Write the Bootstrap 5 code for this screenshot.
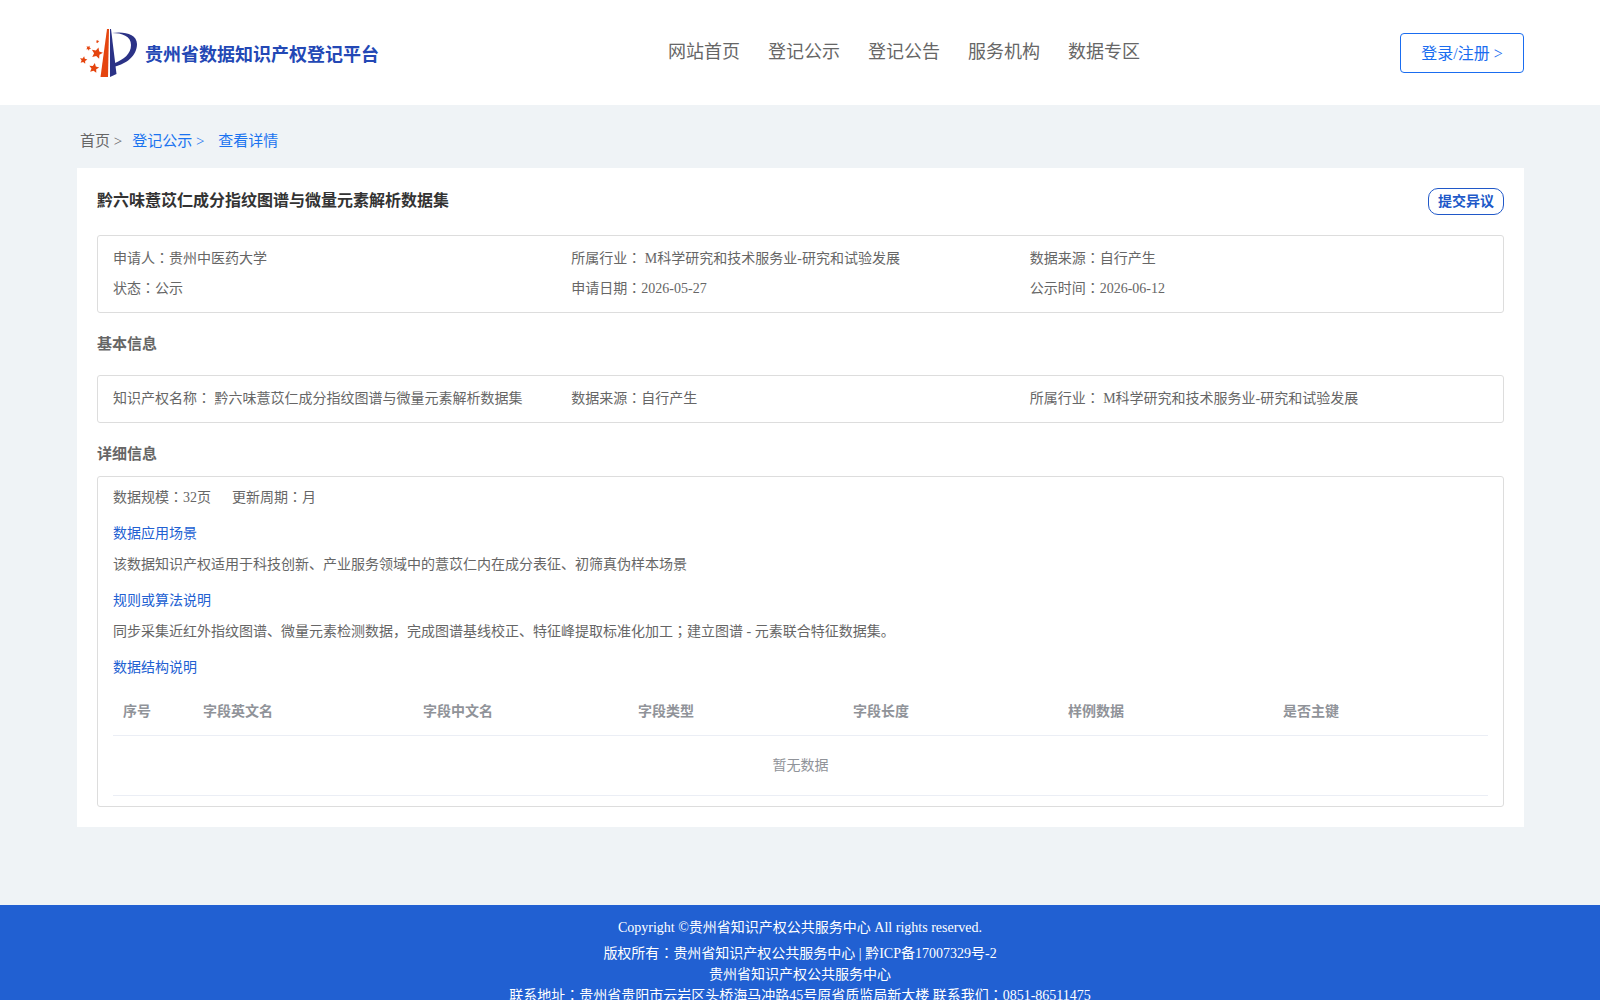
<!DOCTYPE html>
<html lang="zh-CN">
<head>
<meta charset="utf-8">
<meta name="viewport" content="width=device-width, initial-scale=1">
<title>贵州省数据知识产权登记平台</title>
<link href="https://cdn.jsdelivr.net/npm/bootstrap@5.3.0/dist/css/bootstrap.min.css" rel="stylesheet">
<style>
body{font-family:"Liberation Serif","WenQuanYi Micro Hei","Droid Sans Fallback","Noto Sans CJK SC",serif;font-size:14px;line-height:21px;color:#666;background:#eff3f6}
a{text-decoration:none}
/* centred full-width punctuation */
.pc{font-family:"Noto Sans CJK TC",sans-serif;font-feature-settings:"locl" 0;line-height:1}
.wrap{padding-left:77px;padding-right:76px}
.site-head{height:105px}
.brand{gap:8px;padding-left:3px}
.brand-name{font-size:18px;font-weight:700;color:#2348b5;line-height:24px;padding-top:5px}
.site-nav{gap:28px;margin-left:29px;padding-bottom:2px;font-size:18px;line-height:24px}
.site-nav a{color:#666}
.btn-login{width:124px;height:40px;padding:2px 0 0;font-size:16px;border-radius:4px;color:#1a6df0;border:1px solid #1a6df0}
.crumbs{height:63px;padding-top:10px;padding-left:3px;gap:10px;font-size:15px;white-space:pre}
.crumbs a{color:#666}
.crumbs .on{color:#1a73f0}
.sheet{padding:20px;margin-bottom:78px}
.sheet h1{font-size:16px;line-height:25px;font-weight:700;color:#333;margin:0}
.btn-object{width:76px;height:27px;padding:0;line-height:21px;font-size:14px;font-weight:700;color:#2058c8;border:1px solid #2058c8;border-radius:10px}
.panel{border:1px solid #ddd;border-radius:3px;padding:8px 15px;line-height:30px}
.panel .row{--bs-gutter-x:0}
.panel-first{margin-top:20px}
.sheet h2{font-size:15px;line-height:22px;font-weight:700;color:#666;margin:20px 0}
.sheet h2.tight{margin-bottom:11px}
.detail{padding:5px 15px 10px;line-height:31px}
.scale-row{gap:21px}
.detail h3{font-size:14px;line-height:31px;font-weight:400;color:#2160d2;margin:5px 0 0}
.detail p{margin:0}
.fields{table-layout:fixed;margin:3px 0 0;line-height:23px;--bs-table-bg:transparent;--bs-table-color:#909399;color:#909399;border-color:#ebeef5}
.fields th{padding:14px 10px 12px;color:#909399;border-bottom:1px solid #ebeef5}
.fields td{padding:18px 10px;color:#909399;border-bottom:1px solid #ebeef5}
.c-no{width:80px}.c-en{width:220px}
.site-foot{background:#2160d2;color:#fff;padding:12px 0 24px}
.copy-line{margin-bottom:5px}
</style>
<script src="https://cdn.jsdelivr.net/npm/bootstrap@5.3.0/dist/js/bootstrap.bundle.min.js"></script>
</head>
<body>
<header class="site-head wrap bg-white d-flex align-items-center justify-content-between">
  <a href="#" class="brand d-flex align-items-center">
    <svg width="57" height="50" viewBox="0 0 57 50" aria-hidden="true">
      <defs><path id="star" d="M0-5L1.500-1.800 5-1.500 2.400.9 3.100 4.400 0 2.700-3.100 4.400-2.400.9-5-1.500-1.500-1.800z"/></defs>
      <path fill="#e5450f" d="M27 1H29L28 49H20.500z"/>
      <path fill="#2b3286" d="M30 1H31L36.500 46 30 49z"/>
      <path fill="#2b3286" d="M32 5C44 3 57 6 57 16 57 28 46 36 35 38.500V35C44 31 51 26 51 17 51 8 42 5 32 5z"/>
      <g fill="#e5450f">
        <use href="#star" transform="translate(17 25) rotate(15) scale(1.150)"/>
        <use href="#star" transform="translate(14 40) rotate(10)"/>
        <use href="#star" transform="translate(3.500 32) rotate(10) scale(.75)"/>
        <use href="#star" transform="translate(8.500 20) rotate(25) scale(.5)"/>
        <use href="#star" transform="translate(17.500 13.500) rotate(20) scale(.35)"/>
      </g>
    </svg>
    <span class="brand-name">贵州省数据知识产权登记平台</span>
  </a>
  <nav class="site-nav d-flex">
    <a href="#">网站首页</a><a href="#">登记公示</a><a href="#">登记公告</a><a href="#">服务机构</a><a href="#">数据专区</a>
  </nav>
  <button type="button" class="btn btn-login">登录/注册 &gt;</button>
</header>
<main class="wrap">
  <nav class="crumbs d-flex align-items-center" aria-label="breadcrumb"><a href="#">首页 &gt;</a><a href="#" class="on">登记公示 &gt; </a><span class="on">查看详情</span></nav>
  <section class="sheet bg-white">
    <div class="d-flex justify-content-between align-items-start">
      <h1>黔六味薏苡仁成分指纹图谱与微量元素解析数据集</h1>
      <button type="button" class="btn btn-object">提交异议</button>
    </div>
    <div class="panel panel-first">
      <div class="row row-cols-3">
        <div class="col">申请人<span class="pc">：</span>贵州中医药大学</div>
        <div class="col">所属行业<span class="pc">：</span> M科学研究和技术服务业-研究和试验发展</div>
        <div class="col">数据来源<span class="pc">：</span>自行产生</div>
        <div class="col">状态<span class="pc">：</span>公示</div>
        <div class="col">申请日期<span class="pc">：</span>2026-05-27</div>
        <div class="col">公示时间<span class="pc">：</span>2026-06-12</div>
      </div>
    </div>
    <h2>基本信息</h2>
    <div class="panel">
      <div class="row row-cols-3">
        <div class="col">知识产权名称<span class="pc">：</span> 黔六味薏苡仁成分指纹图谱与微量元素解析数据集</div>
        <div class="col">数据来源<span class="pc">：</span>自行产生</div>
        <div class="col">所属行业<span class="pc">：</span> M科学研究和技术服务业-研究和试验发展</div>
      </div>
    </div>
    <h2 class="tight">详细信息</h2>
    <div class="panel detail">
      <div class="scale-row d-flex"><span>数据规模<span class="pc">：</span>32页</span><span>更新周期<span class="pc">：</span>月</span></div>
      <h3>数据应用场景</h3>
      <p>该数据知识产权适用于科技创新、产业服务领域中的薏苡仁内在成分表征、初筛真伪样本场景</p>
      <h3>规则或算法说明</h3>
      <p>同步采集近红外指纹图谱、微量元素检测数据，完成图谱基线校正、特征峰提取标准化加工<span class="pc">；</span>建立图谱 - 元素联合特征数据集。</p>
      <h3>数据结构说明</h3>
      <table class="table fields">
        <thead><tr><th class="c-no">序号</th><th class="c-en">字段英文名</th><th>字段中文名</th><th>字段类型</th><th>字段长度</th><th>样例数据</th><th>是否主键</th></tr></thead>
        <tbody><tr><td colspan="7" class="text-center">暂无数据</td></tr></tbody>
      </table>
    </div>
  </section>
</main>
<footer class="site-foot text-center">
  <div class="copy-line">Copyright ©贵州省知识产权公共服务中心 All rights reserved.</div>
  <div>版权所有<span class="pc">：</span>贵州省知识产权公共服务中心 | 黔ICP备17007329号-2</div>
  <div>贵州省知识产权公共服务中心</div>
  <div>联系地址<span class="pc">：</span>贵州省贵阳市云岩区头桥海马冲路45号原省质监局新大楼 联系我们<span class="pc">：</span>0851-86511475</div>
</footer>
</body>
</html>
